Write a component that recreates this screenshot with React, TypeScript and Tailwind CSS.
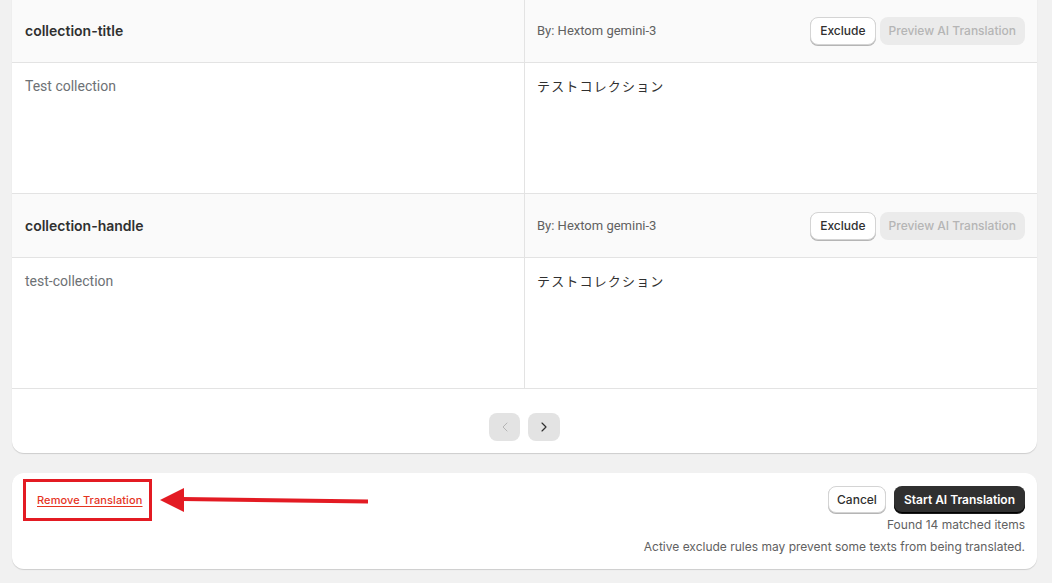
import { ChevronLeft, ChevronRight } from "lucide-react";

const rows = [
  { key: "collection-title", source: "Test collection", target: "テストコレクション" },
  { key: "collection-handle", source: "test-collection", target: "テストコレクション" },
];

function Row({ k, source, target }: { k: string; source: string; target: string }) {
  return (
    <div className="border-b border-[#e3e3e3]">
      <div className="grid grid-cols-[513px_1fr] border-b border-[#e3e3e3] bg-[#fafafa]">
        <div className="flex h-[63px] items-center border-r border-[#e3e3e3] px-[13px] font-['Inter',sans-serif] text-[14px] font-semibold text-[#303030]">
          {k}
        </div>
        <div className="flex h-[63px] items-center justify-between px-3">
          <span className="font-['Roboto',sans-serif] text-[13px] text-[#616161]">By: Hextom gemini-3</span>
          <div className="flex items-center gap-1">
            <button className="h-[28px] rounded-lg border border-[#d4d4d4] bg-white px-[9px] font-['Inter',sans-serif] text-[12px] font-medium text-[#303030] shadow-[0_1px_0_#b5b5b5]">
              Exclude
            </button>
            <button className="h-[28px] rounded-lg bg-[#ebebeb] px-[9px] font-['Inter',sans-serif] text-[12px] font-medium text-[#b5b5b5]">
              Preview AI Translation
            </button>
          </div>
        </div>
      </div>
      <div className="grid h-[130px] grid-cols-[513px_1fr] bg-white">
        <div className="border-r border-[#e3e3e3] px-[13px] pt-[13px] font-['Roboto',sans-serif] text-[14px] text-[#6d7175]">
          {source}
        </div>
        <div className="px-3 pt-[13px] font-['Noto_Sans_CJK_JP',sans-serif] text-[13px] tracking-[0.09em] text-[#303030]">
          {target}
        </div>
      </div>
    </div>
  );
}

export default function App() {
  return (
    <div className="min-h-[583px] overflow-hidden bg-[#f1f1f1] pb-4">
      <div className="-mt-[1px] ml-3 mr-[15px] overflow-hidden rounded-b-xl bg-white shadow-[0_1px_1px_rgba(0,0,0,0.15)]">
        {rows.map((r) => (
          <Row key={r.key} k={r.key} source={r.source} target={r.target} />
        ))}
        <div className="flex items-center justify-center gap-2 pb-[12px] pt-[24px]">
          <button className="flex h-[28px] w-[31px] items-center justify-center rounded-lg bg-[#e3e3e3] text-[#b5b5b5]">
            <ChevronLeft className="h-4 w-4" strokeWidth={1.5} />
          </button>
          <button className="flex h-[28px] w-[32px] items-center justify-center rounded-lg bg-[#e3e3e3] text-[#303030]">
            <ChevronRight className="h-4 w-4" strokeWidth={1.75} />
          </button>
        </div>
      </div>

      <div className="relative ml-3 mr-[15px] mt-5 flex justify-between rounded-xl bg-white px-3 pb-[12px] pt-[13px] shadow-[0_1px_1px_rgba(0,0,0,0.15)]">
        <div>
          <div className="-mt-[7px] -ml-[1px] flex h-[42px] w-[129px] items-center border-[3px] border-[#e31b23] pl-[11px]">
            <a className="whitespace-nowrap font-['Inter',sans-serif] text-[11px] font-medium tracking-[0.01em] text-[#e5341f] underline underline-offset-2">
              Remove Translation
            </a>
          </div>
        </div>
        <svg className="absolute left-[146px] top-[13px]" width="211" height="28" viewBox="0 0 211 28">
          <polygon points="2,14 26,2 26,26" fill="#e31b23" />
          <path d="M24 13 L210 15.5" stroke="#e31b23" strokeWidth="4" />
        </svg>
        <div className="flex flex-col items-end">
          <div className="flex gap-2">
            <button className="h-[27px] rounded-lg border border-[#d4d4d4] bg-white px-[8px] font-['Inter',sans-serif] text-[12px] font-medium text-[#303030] shadow-[0_1px_0_#b5b5b5]">
              Cancel
            </button>
            <button className="h-[27px] rounded-lg bg-[#303030] px-[10px] font-['Inter',sans-serif] text-[12px] font-semibold text-white shadow-[inset_0_-1px_0_#000,0_1px_0_#1a1a1a]">
              Start AI Translation
            </button>
          </div>
          <p className="mt-[2px] font-['Inter',sans-serif] text-[12px] leading-5 text-[#616161]">Found 14 matched items</p>
          <p className="mt-[2px] font-['Inter',sans-serif] text-[12px] leading-5 text-[#616161]">
            Active exclude rules may prevent some texts from being translated.
          </p>
        </div>
      </div>
    </div>
  );
}
